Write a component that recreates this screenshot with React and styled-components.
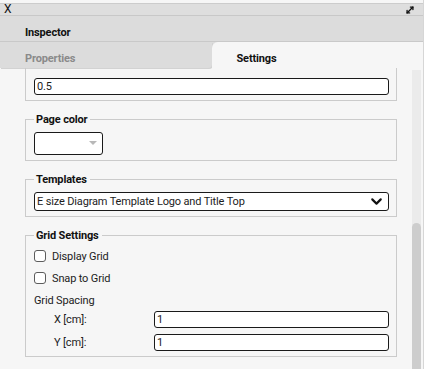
import styled, { createGlobalStyle } from "styled-components";
import { MoveDiagonal, ChevronDown } from "lucide-react";

const GlobalStyle = createGlobalStyle`
  html, body {
    margin: 0;
    background: #ffffff;
    font-family: Roboto, "Liberation Sans", Arial, sans-serif;
    color: #1c1c1c;
  }
`;

const Inspector = () => {
  return (
    <Panel>
      <GlobalStyle />
      <TitleBar>
        <span>X</span>
        <MoveDiagonal size={10} strokeWidth={3.2} color="#111" />
      </TitleBar>
      <Header>Inspector</Header>
      <Tabs>
        <Tab>Properties</Tab>
        <Tab $active>Settings</Tab>
      </Tabs>

      <ScrollArea>
        <Viewport>
          <Group $top={10}>
            <legend>Page scale</legend>
            <TextInput defaultValue="0.5" />
          </Group>

          <Group>
            <legend>Page color</legend>
            <Swatch>
              <Caret />
            </Swatch>
          </Group>

          <Group>
            <legend>Templates</legend>
            <SelectWrap>
              <Select defaultValue="e-top">
                <option value="e-top">E size Diagram Template Logo and Title Top</option>
                <option value="e-bottom">E size Diagram Template Logo and Title Bottom</option>
              </Select>
              <ChevronDown size={17} strokeWidth={3} color="#111" />
            </SelectWrap>
          </Group>

          <Group>
            <legend>Grid Settings</legend>
            <CheckRow>
              <Check type="checkbox" />
              Display Grid
            </CheckRow>
            <CheckRow>
              <Check type="checkbox" />
              Snap to Grid
            </CheckRow>
            <SubLabel>Grid Spacing</SubLabel>
            <SpacingGrid>
              <span>X [cm]:</span>
              <TextInput defaultValue="1" />
              <span>Y [cm]:</span>
              <TextInput defaultValue="1" />
            </SpacingGrid>
          </Group>
        </Viewport>
        <Track>
          <Thumb $size={146} />
        </Track>
      </ScrollArea>
    </Panel>
  );
};

const Panel = styled.div`
  width: 424px;
  height: 100vh;
  box-sizing: border-box;
  padding-top: 3px;
  display: flex;
  flex-direction: column;
  background: #f6f6f6;
  border-right: 1px solid #d6d6d6;
  font-size: 11px;
  letter-spacing: -0.15px;
`;

const TitleBar = styled.div`
  height: 13px;
  flex-shrink: 0;
  box-sizing: border-box;
  display: flex;
  align-items: center;
  justify-content: space-between;
  padding: 0 8px 0 4px;
  background: #dedede;
  border-top: 1px solid #cccccc;
  border-bottom: 1px solid #c8c8c8;
  font-size: 12px;
  line-height: 11px;
  color: #111;
`;

const Header = styled.div`
  height: 26px;
  flex-shrink: 0;
  box-sizing: border-box;
  padding: 7px 0 0 25px;
  display: flex;
  align-items: center;
  background: #dcdcdc;
  border-bottom: 1px solid #c9c9c9;
  font-weight: 700;
  color: #111;
`;

const Tabs = styled.div`
  height: 26px;
  flex-shrink: 0;
  display: flex;
  background: #dcdcdc;
`;

const Tab = styled.div`
  flex: 1;
  display: flex;
  align-items: center;
  padding: 6px 0 0 25px;
  font-weight: 700;
  color: ${(p) => (p.$active ? "#111" : "#8a8a8a")};
  background: ${(p) => (p.$active ? "#f6f6f6" : "#dcdcdc")};
  border-top-left-radius: ${(p) => (p.$active ? "6px" : "0")};
  border-bottom-right-radius: ${(p) => (p.$active ? "0" : "4px")};
  box-shadow: ${(p) => (p.$active ? "none" : "1px 1px 0 #d2d2d2")};
`;

const ScrollArea = styled.div`
  flex: 1;
  min-height: 0;
  display: flex;
  overflow: hidden;
`;

const Viewport = styled.div`
  flex: 1;
  min-width: 0;
  overflow: hidden;
  display: flex;
  flex-direction: column;
  justify-content: flex-end;
  gap: 12px;
  padding: 0 15px 12px 25px;

  & > * {
    flex-shrink: 0;
  }
`;

const Track = styled.div`
  width: 9px;
  margin: 2px 2px 0 0;
  display: flex;
  flex-direction: column;
  justify-content: flex-end;
  background: #ebebeb;
`;

const Thumb = styled.div`
  height: ${(p) => p.$size}px;
  border-radius: 5px 5px 0 0;
  background: #cdcdcd;
`;

const Group = styled.fieldset`
  margin: 0;
  min-width: 0;
  padding: ${(p) => p.$top ?? 6}px 7px 5px 8px;
  border: 1px solid #cbcbcb;
  display: flex;
  flex-direction: column;

  legend {
    padding: 0 3px 0 2px;
    font-weight: 700;
    line-height: 13px;
    color: #111;
  }
`;

const TextInput = styled.input`
  width: 100%;
  height: 17px;
  box-sizing: border-box;
  margin: 0;
  padding: 0 2px;
  border: 1px solid #1a1a1a;
  border-radius: 3px;
  background: #ffffff;
  font: 11px Roboto, "Liberation Sans", sans-serif;
  letter-spacing: -0.15px;
  color: #1c1c1c;
  outline: none;
`;

const Swatch = styled.div`
  width: 69px;
  height: 23px;
  box-sizing: border-box;
  display: flex;
  align-items: center;
  justify-content: flex-end;
  padding: 0 5px 2px 0;
  border: 1px solid #1a1a1a;
  border-radius: 3px;
  background: #ffffff;
`;

const Caret = styled.span`
  width: 0;
  height: 0;
  border-left: 4px solid transparent;
  border-right: 4px solid transparent;
  border-top: 4px solid #b8b8b8;
`;

const SelectWrap = styled.div`
  position: relative;

  svg {
    position: absolute;
    right: 4px;
    top: 1px;
    pointer-events: none;
  }
`;

const Select = styled.select`
  width: 100%;
  height: 19px;
  box-sizing: border-box;
  margin: 0;
  padding: 0 20px 0 2px;
  appearance: none;
  border: 1px solid #1a1a1a;
  border-radius: 3px;
  background: #ffffff;
  font: 11px Roboto, "Liberation Sans", sans-serif;
  letter-spacing: -0.15px;
  color: #1c1c1c;
  outline: none;
`;

const CheckRow = styled.label`
  height: 16px;
  margin-bottom: 6px;
  display: flex;
  align-items: center;
  gap: 6px;
  color: #1c1c1c;
`;

const Check = styled.input`
  appearance: none;
  width: 12px;
  height: 12px;
  margin: 0;
  box-sizing: border-box;
  border: 1px solid #5c5c5c;
  border-radius: 3px;
  background: #ffffff;
`;

const SubLabel = styled.div`
  height: 16px;
  margin-bottom: 3px;
  display: flex;
  align-items: center;
  color: #1c1c1c;
`;

const SpacingGrid = styled.div`
  display: grid;
  grid-template-columns: 120px 1fr;
  row-gap: 6px;
  align-items: center;

  span {
    padding-left: 20px;
    color: #1c1c1c;
  }
`;

export default Inspector;
